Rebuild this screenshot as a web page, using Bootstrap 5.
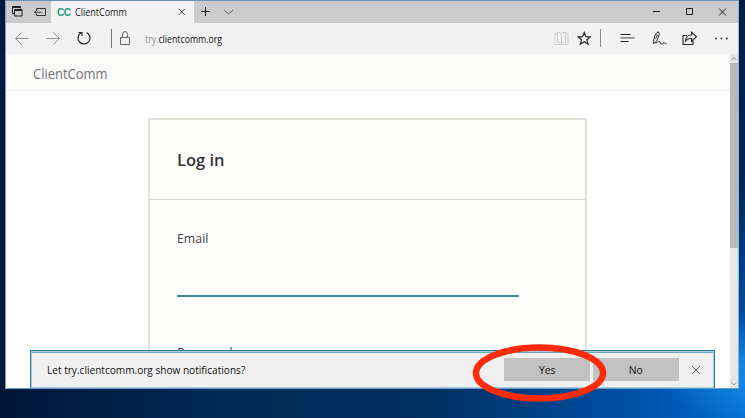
<!DOCTYPE html>
<html lang="en">
<head>
<meta charset="utf-8">
<meta name="viewport" content="width=device-width, initial-scale=1">
<title>ClientComm</title>
<link href="https://cdn.jsdelivr.net/npm/bootstrap@5.3.0/dist/css/bootstrap.min.css" rel="stylesheet">
<style>
body{width:745px;height:418px;font-family:"Open Sans","Noto Sans",sans-serif;color:#222;
 background:radial-gradient(ellipse 110px 60px at 775px 372px,#1f93f0,transparent),linear-gradient(180deg,#001b43 0,#002450 180px,#003a7a 250px,#0050a8 340px,#0070d0 395px) 739px 0/6px 388px no-repeat,linear-gradient(90deg,#001637 0,#002a58 220px,#00305f 430px,#00499a 590px,#0069cc 745px)}
svg{display:block;fill:none;stroke:#222;flex:none}
.squeeze{display:inline-block;transform:scaleX(.877);transform-origin:0 50%;white-space:nowrap}
.desk-left{width:5px;height:388px;background:#001840}
.window{width:734px;height:389px;border:1px solid #5c9fcd;border-left-color:#7b9cc0;border-top-color:#6b90b8;border-right-color:#78bdf0;background:#fff}
.titlebar{height:22px;background:#cbcbcb}
.tabbtns{width:45px}
.tab-active{width:143px;background:#f2f2f2;font-size:10px;color:#222}
.tabname{transform:scaleX(.9);margin-left:2px}
.fav{font:bold 10px "Liberation Sans",sans-serif;color:#1d9a80;letter-spacing:-.5px;width:16px;margin-left:2px}
.toolbar{height:31px;background:#f2f2f2}
.addr{font-size:10px;color:#111;padding-top:1px}
.addr span span{color:#909090}
.site{width:724px;background:#fff}
.sitehead{height:37px;background:#fafaf9;border-bottom:1px solid #ebebe8;font-size:14px;color:#737373;padding:3px 0 0 27px}
.sitehead .squeeze{transform:scaleX(.925)}
.login{width:439px;height:280px;margin:27px 0 0 142px;border:2px solid #e3e2da;background:#fffffe}
.loginhead{height:80px;border-bottom:1px solid #dad9d0;padding:2px 0 0 27px;font-size:16.500px;font-weight:600;color:#333}
.loginbody{padding:28px 66px 0 27px;font-size:13px;color:#404447;line-height:20px}
.loginbody .squeeze{transform:scaleX(.95)}
.field{height:28px;margin-top:21px;border:0;border-bottom:2px solid #3b8c92;border-radius:0;background:transparent;padding:0}
.nextlabel{margin-top:45px}
.scroll{width:8px;background:#e6e6e6}
.thumb{height:185px;background:#b9b9b9}
.notice{left:24px;bottom:0;width:685px;height:38px;border:1px solid #2c7d9e;border-bottom:0;box-shadow:inset 0 0 0 1px #a9cddb,inset 0 2px #6ba6bd;background:#f0f0f0;font-size:11.500px;color:#111;padding:0 14px 0 16px}
.choice{width:86px;height:23px;background:#c2c2c2;border-radius:0;border:0;padding:0;font-size:11.500px;line-height:23px;color:#111}
.choice+.choice{margin-left:3px}
.choice .squeeze{transform:scaleX(.9);transform-origin:50% 50%}
.dismiss{margin-left:13px}
.ring{left:472px;top:343px}
</style>
<script src="https://cdn.jsdelivr.net/npm/bootstrap@5.3.0/dist/js/bootstrap.bundle.min.js"></script>
</head>
<body class="position-relative overflow-hidden">
<div class="d-flex">
<div class="desk-left"></div>
<main class="window d-flex flex-column overflow-hidden">
 <div class="titlebar d-flex align-items-stretch flex-shrink-0">
  <div class="tabbtns d-flex align-items-center">
   <svg width="45" height="22"><path d="M8.500 12.500h-2v-7h8v2M6.500 6.500h8"/><path d="M8.500 8.500h7.500v6.500h-7.500zM8.500 9.500h7.500"/><path d="M30.500 9.500V7.500h9v7h-9V13M28.500 11.200h7M31 8.700l-2.500 2.500 2.500 2.500" stroke="#333"/></svg>
  </div>
  <div class="tab-active d-flex align-items-center ps-1">
   <span class="fav">CC</span><span class="squeeze tabname">ClientComm</span>
   <svg class="ms-auto me-2" width="8" height="8"><path d="M.8.800l6 6M6.800.8l-6 6" stroke="#444"/></svg>
  </div>
  <svg width="44" height="22"><path d="M7 10.500h9M11.500 6v9"/><path d="M30 9l4.500 4L39 9" stroke="#666"/></svg>
  <svg class="ms-auto" width="93" height="22"><path d="M8 10.500h7M41.500 7.500h6v6h-6zM74 7.500l7 7M81 7.500l-7 7"/></svg>
 </div>
 <div class="toolbar d-flex align-items-center flex-shrink-0">
  <svg width="139" height="31"><g stroke="#929292"><path d="M22.500 15.500H9.500M15.500 9.500l-6 6 6 6M40.500 15.500h13M47.500 9.500l6 6-6 6"/></g><path d="M75 9.800a6 6 0 1 0 5.500-.3M72.500 9.500h3.500v3.500" stroke-width="1.200"/><path d="M105.500 6v19" stroke="#777"/><g stroke="#666"><path d="M114.500 14.500h9v7h-9zM116.500 14.500v-3q0-3 2.500-3t2.500 3v3"/></g></svg>
  <div class="addr"><span class="squeeze"><span>try.</span>clientcomm.org</span></div>
  <svg class="ms-auto" width="188" height="31"><path d="M19.500 21.500h-6.500v-11h2v-1h3l1.500 1 1.500-1h3v1h2v11zM19.500 10.500v11M15.500 10v9.500h3l1 1 1-1h3V10" stroke="#cdcdcd"/><path d="M42.200 9.500l1.700 4.200 4.300.3-3.300 2.800 1.100 4.400-3.800-2.400-3.800 2.400 1.100-4.400-3.300-2.800 4.300-.3z" stroke-width="1.200"/><path d="M58.500 6v18" stroke="#888"/><path d="M78.500 11.500h10M78.500 18.500h8"/><path d="M78.500 14.900h14" stroke="#444"/><path d="M111.500 20.500c0-5 2-11 4.500-11.500 2.500 0 1 4-.5 7-.8 1.800-2 4-4 4.500M114 11.500l1.500 1-2 3M113 19.500c2 1 3-1.500 4.500-1 1.200.4 0 2.500 2 2.500 1.500 0 1.500-1.500 3-1 .8.500 1 1 2 .5"/><path d="M145 12.500h-4v9h10v-4M143.500 18c.2-4 2.300-6 6-6V9.200l5 4.600-5 4.400v-2.700c-3-.2-4.800.7-6 2.500z" stroke-width="1.100"/><g fill="#222" stroke="none"><circle cx="174" cy="15.500" r=".9"/><circle cx="179.400" cy="15.500" r=".9"/><circle cx="184.800" cy="15.500" r=".9"/></g></svg>
  <div class="ps-2"></div>
 </div>
 <div class="d-flex flex-grow-1 position-relative overflow-hidden">
  <div class="site">
   <div class="sitehead d-flex align-items-center"><span class="squeeze">ClientComm</span></div>
   <section class="login">
    <div class="loginhead d-flex align-items-center">Log in</div>
    <div class="loginbody"><label for="email" class="squeeze">Email</label><input id="email" class="field d-block w-100"><div class="nextlabel"><span class="squeeze">Password</span></div></div>
   </section>
  </div>
  <div class="scroll d-flex flex-column justify-content-between">
   <div><svg width="8" height="9"><path d="M1.500 6L4 3.500 6.500 6" stroke="#888"/></svg><div class="thumb"></div></div>
   <svg width="8" height="9"><path d="M1.500 3.500L4 6l2.500-2.500" stroke="#999"/></svg>
  </div>
  <div class="notice position-absolute d-flex align-items-center">
   <span class="squeeze">Let try.clientcomm.org show notifications?</span>
   <button class="btn choice ms-auto"><span class="squeeze">Yes</span></button><button class="btn choice"><span class="squeeze">No</span></button>
   <svg class="dismiss" width="8" height="8"><path d="M0 0l8 8M8 0L0 8" stroke="#555"/></svg>
  </div>
 </div>
</main>
</div>
<svg class="ring position-absolute" width="136" height="60"><ellipse cx="67.500" cy="30" rx="63.500" ry="25.500" stroke="#ff2b06" stroke-width="6.500"/></svg>
</body>
</html>
